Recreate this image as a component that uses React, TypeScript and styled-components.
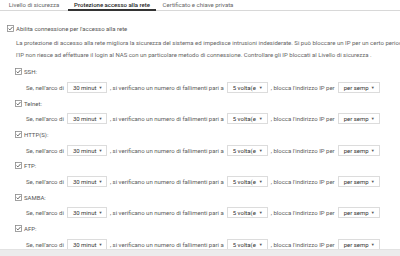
import React, { FC } from 'react';
import styled, { createGlobalStyle } from 'styled-components';

const GlobalStyle = createGlobalStyle`
  html, body {
    margin: 0;
    padding: 0;
    background: #fff;
    overflow: hidden;
  }
  body {
    font-family: Roboto, 'Liberation Sans', sans-serif;
  }
`;

const Page = styled.div`
  width: 400px;
  height: 256px;
  overflow: hidden;
  display: flex;
  flex-direction: column;
  font-size: 6px;
  color: #5f5f5f;
`;

const TabBar = styled.div`
  display: flex;
  height: 10px;
  border-bottom: 1px solid #d8d8d8;
  flex-shrink: 0;
`;

const Tab = styled.div<{ active?: boolean; w: number }>`
  width: ${(p) => p.w}px;
  box-sizing: border-box;
  line-height: 10px;
  text-align: center;
  white-space: nowrap;
  color: ${(p) => (p.active ? '#222' : '#666')};
  font-weight: ${(p) => (p.active ? 500 : 400)};
  border-bottom: ${(p) => (p.active ? '2px solid #333' : 'none')};
  height: ${(p) => (p.active ? '11px' : '10px')};
`;

const Content = styled.div`
  display: flex;
  flex-direction: column;
  padding: 11px 0 0 7px;
  flex: 1;
  min-height: 0;
  overflow: hidden;
`;

const CheckRow = styled.div<{ indent?: number; h: number }>`
  display: flex;
  align-items: center;
  gap: 2px;
  height: ${(p) => p.h}px;
  flex-shrink: 0;
  padding-left: ${(p) => p.indent || 0}px;
  white-space: nowrap;
  color: #555;
`;

const Box = styled.svg`
  width: 7px;
  height: 7px;
  flex-shrink: 0;
`;

const Desc = styled.div`
  padding: 3px 0 0 9px;
  line-height: 12px;
  white-space: nowrap;
  color: #666;
  height: 24px;
  flex-shrink: 0;
`;

const Services = styled.div`
  display: flex;
  flex-direction: column;
  margin-top: 3px;
  flex-shrink: 0;
`;

const Rule = styled.div`
  display: flex;
  align-items: center;
  gap: 3px;
  height: 16px;
  flex-shrink: 0;
  padding-left: 19px;
  white-space: nowrap;
  color: #5c5c5c;
`;

const Select = styled.div<{ w: number }>`
  width: ${(p) => p.w}px;
  height: 11px;
  box-sizing: border-box;
  border: 1px solid #dcdcdc;
  display: flex;
  align-items: center;
  justify-content: space-between;
  padding: 0 4px 0 5px;
  color: #333;
  background: #fff;
  flex-shrink: 0;
`;

const SelectText = styled.span`
  white-space: nowrap;
`;

const Caret = styled.span`
  font-size: 4px;
  color: #555;
  margin-left: 2px;
`;

const Footer = styled.div`
  height: 6px;
  background: #ececec;
  border-top: 1px solid #e2e2e2;
  flex-shrink: 0;
`;

const CheckIcon: FC = () => (
  <Box viewBox="0 0 7 7">
    <rect x="0.5" y="0.5" width="6" height="6" fill="#fff" stroke="#8a8a8a" strokeWidth="0.8" />
    <path d="M1.6 3.6 L2.9 4.9 L5.5 2" fill="none" stroke="#555" strokeWidth="0.9" />
  </Box>
);

const Dropdown: FC<{ value: string; w: number }> = ({ value, w }) => (
  <Select w={w}>
    <SelectText>{value}</SelectText>
    <Caret>▼</Caret>
  </Select>
);

const services = ['SSH:', 'Telnet:', 'HTTP(S):', 'FTP:', 'SAMBA:', 'AFP:'];

const App: FC = () => (
  <>
    <GlobalStyle />
    <Page>
      <TabBar>
        <Tab w={68}>Livello di sicurezza</Tab>
        <Tab w={88} active>
          Protezione accesso alla rete
        </Tab>
        <Tab w={84}>Certificato e chiave privata</Tab>
      </TabBar>
      <Content>
        <CheckRow h={12}>
          <CheckIcon />
          Abilita connessione per l'accesso alla rete
        </CheckRow>
        <Desc>
          La protezione di accesso alla rete migliora la sicurezza del sistema ed impedisce intrusioni indesiderate. Si può bloccare un IP per un certo periodo di tempo se
          <br />
          l'IP non riesce ad effettuare il login al NAS con un particolare metodo di connessione. Controllare gli IP bloccati al Livello di sicurezza .
        </Desc>
        <Services>
          {services.map((s) => (
            <React.Fragment key={s}>
              <CheckRow indent={8} h={15.4}>
                <CheckIcon />
                {s}
              </CheckRow>
              <Rule>
                Se, nell'arco di
                <Dropdown value="30 minut" w={40} />
                , si verificano un numero di fallimenti pari a
                <Dropdown value="5 volta(e" w={41} />
                , blocca l'indirizzo IP per
                <Dropdown value="per semp" w={42} />
              </Rule>
            </React.Fragment>
          ))}
        </Services>
      </Content>
      <Footer />
    </Page>
  </>
);

export default App;
